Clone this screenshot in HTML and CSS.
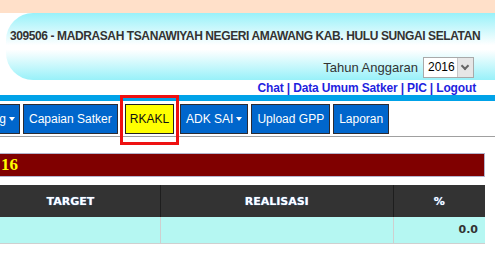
FILE: index.html
```html
<!DOCTYPE html>
<html lang="id">
<head>
    <meta charset="UTF-8">
    <meta name="viewport" content="width=device-width, initial-scale=1.0">
    <title>RKAKL - Satker</title>
    <link rel="stylesheet" href="styles.css">
</head>
<body>
    <div class="topbar"></div>

    <div class="header">
        <div class="title">309506 - MADRASAH TSANAWIYAH NEGERI AMAWANG KAB. HULU SUNGAI SELATAN</div>
        <div class="year">
            <span>Tahun Anggaran</span>
            <span class="select">
                <span class="select-value">2016</span>
                <span class="select-arrow"></span>
            </span>
        </div>
    </div>

    <div class="links">
        <a href="#">Chat</a> | <a href="#">Data Umum Satker</a> | <a href="#">PIC</a> | <a href="#">Logout</a>
    </div>

    <div class="bluebar"></div>

    <div class="nav">
        <a href="#" class="btn first">Monitoring <span class="caret"></span></a>
        <a href="#" class="btn">Capaian Satker</a>
        <span class="highlight">
            <a href="#" class="btn active">RKAKL</a>
            <span class="marker"></span>
        </span>
        <a href="#" class="btn">ADK SAI <span class="caret"></span></a>
        <a href="#" class="btn">Upload GPP</a>
        <a href="#" class="btn">Laporan</a>
    </div>

    <div class="rule"></div>

    <div class="banner">16</div>

    <table class="grid">
        <thead>
            <tr>
                <th class="col-target">TARGET</th>
                <th class="col-real">REALISASI</th>
                <th class="col-pct">%</th>
            </tr>
        </thead>
        <tbody>
            <tr>
                <td></td>
                <td></td>
                <td class="num">0.0</td>
            </tr>
        </tbody>
    </table>
</body>
</html>
```

FILE: styles.css
```css
* {
    margin: 0;
    padding: 0;
    box-sizing: border-box;
}

body {
    font-family: "Liberation Sans", Arial, sans-serif;
    background: #fff;
    color: #333;
    overflow: hidden;
    width: 495px;
}

.topbar {
    height: 13px;
    background: #ffe0c9;
}

.header {
    margin-left: 6px;
    height: 67px;
    border-radius: 27px 0 0 27px;
    background: linear-gradient(#98f1f9 0%, #ffffff 48%, #ffffff 55%, #98f1f9 100%);
    padding: 16px 21px 0 4px;
}

.title {
    font-size: 12px;
    font-weight: bold;
    line-height: 14px;
    letter-spacing: -0.4px;
    white-space: nowrap;
}

.year {
    display: flex;
    justify-content: flex-end;
    align-items: center;
    gap: 5px;
    margin-top: 14px;
    font-size: 13px;
}

.select {
    display: flex;
    width: 51px;
    height: 21px;
    border: 1px solid #a9a9a9;
    background: #fff;
}

.select-value {
    flex: 1;
    padding-left: 4px;
    font-size: 12px;
    line-height: 19px;
    color: #000;
}

.select-arrow {
    width: 16px;
    background: #e6e6e6;
    border-left: 1px solid #c8c8c8;
    position: relative;
}

.select-arrow::after {
    content: "";
    position: absolute;
    left: 4px;
    top: 5px;
    width: 4px;
    height: 4px;
    border-right: 2px solid #666;
    border-bottom: 2px solid #666;
    transform: rotate(45deg);
}

.links {
    text-align: right;
    padding: 1px 19px 0 0;
    height: 15px;
    font-size: 12px;
    font-weight: bold;
    line-height: 14px;
    letter-spacing: -0.15px;
    color: #1f1fd8;
}

.links a {
    color: #1f1fe0;
    text-decoration: none;
}

.bluebar {
    height: 6px;
    background: #00a2e8;
}

.nav {
    display: flex;
    gap: 3px;
    margin: 3px 0 0 -70px;
}

.btn {
    display: flex;
    align-items: center;
    gap: 3px;
    flex: none;
    height: 30px;
    padding: 0 5px;
    background: #0066cc;
    border: 1px solid #2b2b33;
    color: #fff;
    font-size: 12px;
    text-decoration: none;
    white-space: nowrap;
}

.btn.first {
    width: 90px;
    justify-content: flex-end;
    padding-right: 4px;
}

.caret {
    width: 0;
    height: 0;
    border-left: 3px solid transparent;
    border-right: 3px solid transparent;
    border-top: 4px solid #fff;
}

.highlight {
    position: relative;
    margin: 0 3px 0 4px;
}

.btn.active {
    padding: 0 4px;
    background: #ffff00;
    color: #111;
    border-color: #222;
}

.marker {
    position: absolute;
    left: -5px;
    right: -5px;
    top: -9px;
    bottom: -11px;
    border: 3px solid #ee1111;
}

.rule {
    height: 1px;
    margin-top: 2px;
    background: #a0a0a0;
}

.banner {
    width: 485px;
    height: 24px;
    margin-top: 16px;
    background: #800000;
    border: 1px solid #b3b3cc;
    border-left: none;
    color: #ffff00;
    font-family: "Liberation Serif", "Times New Roman", serif;
    font-size: 17px;
    font-weight: bold;
    line-height: 22px;
    padding-left: 1px;
}

.grid {
    margin: 8px 0 0 -20px;
    width: 505px;
    border-collapse: collapse;
    font-family: "DejaVu Sans", Verdana, sans-serif;
    font-size: 11px;
    font-weight: bold;
}

.grid th {
    height: 32px;
    background: #333;
    color: #fff;
    border-left: 1px solid #1e1e1e;
    text-shadow: 0 0 1px #6af;
}

.col-target { width: 180px; }
.col-real { width: 233px; }
.col-pct { width: 92px; }

.grid td {
    height: 26px;
    background: #b5f7f2;
    border-left: 1px solid #cfcfcf;
    border-bottom: 1px solid #cfcfcf;
}

.grid td.num {
    text-align: right;
    padding-right: 7px;
    color: #333;
}
```
